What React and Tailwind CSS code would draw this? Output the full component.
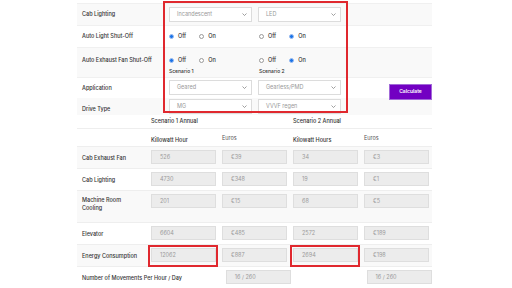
import React from 'react';

const Chevron = () => (
    <svg width="5" height="3" viewBox="0 0 5 3" className="shrink-0">
        <path d="M0.5 0.5 L2.5 2.5 L4.5 0.5" fill="none" stroke="#777" strokeWidth="0.7" />
    </svg>
);

const Select = ({ value, width = 'w-[83px]' }) => (
    <div className={`${width} h-[15px] bg-white border border-[#dcdcdc] flex items-center justify-between pl-[7px] pr-[4px] text-[#999] text-[5.5px]`}>
        <span>{value}</span>
        <Chevron />
    </div>
);

const Radio = ({ checked }) =>
    checked ? (
        <span className="w-[5px] h-[5px] rounded-full bg-[#1a73e8] border border-[#9bbcf0] inline-block" />
    ) : (
        <span className="w-[5px] h-[5px] rounded-full bg-white border border-[#9a9a9a] inline-block" />
    );

const RadioPair = ({ on }) => (
    <div className="flex items-center gap-[4px] text-[5.5px] text-[#333] font-medium">
        <Radio checked={!on} />
        <span className="mr-[9px]">Off</span>
        <Radio checked={on} />
        <span>On</span>
    </div>
);

const Field = ({ value, boxed }) => (
    <div className="relative w-[65px]">
        <div className="h-[14px] bg-[#ececec] border border-[#dedede] flex items-center pl-[8px] text-[#9a9a9a] text-[5.5px]">
            {value}
        </div>
        {boxed && <div className="absolute -left-[3px] -right-[2px] -top-[3px] -bottom-[5px] border-2 border-[#e0282e]" />}
    </div>
);

const rows = [
    { label: 'Cab Exhaust Fan', values: ['526', '€39', '34', '€3'], bg: 'bg-[#f9f9f9]' },
    { label: 'Cab Lighting', values: ['4730', '€348', '19', '€1'], bg: 'bg-white' },
    { label: 'Machine Room Cooling', values: ['201', '€15', '68', '€5'], bg: 'bg-[#f9f9f9]', tall: true },
    { label: 'Elevator', values: ['6604', '€485', '2572', '€189'], bg: 'bg-white' },
    { label: 'Energy Consumption', values: ['12062', '€887', '2694', '€198'], bg: 'bg-[#f9f9f9]', boxed: [0, 2] },
];

export default function App() {
    return (
        <div className="w-[512px] h-[288px] bg-white overflow-hidden font-['Inter',sans-serif]">
            <div className="ml-[77px] w-[355px] pt-[3px]">
                {/* inputs */}
                <div className="relative">
                    <div className="flex h-[22px] items-center bg-[#f9f9f9] border-t border-[#f0f0f0]">
                        <div className="w-[86px] pl-[5px] text-[5.5px] font-medium text-[#333]">Cab Lighting</div>
                        <div className="w-[90px] pl-[6px]"><Select value="Incandescent" /></div>
                        <div className="w-[95px] pl-[5px]"><Select value="LED" /></div>
                    </div>
                    <div className="flex h-[22px] items-center bg-white border-t border-[#f0f0f0]">
                        <div className="w-[86px] pl-[5px] text-[5.5px] font-medium text-[#333]">Auto Light Shut-Off</div>
                        <div className="w-[90px] pl-[6px]"><RadioPair on={false} /></div>
                        <div className="w-[95px] pl-[6px]"><RadioPair on={true} /></div>
                    </div>
                    <div className="flex h-[30px] pt-[8px] bg-[#f9f9f9] border-t border-[#f0f0f0]">
                        <div className="w-[86px] pl-[5px] text-[5.5px] font-medium text-[#333]">Auto Exhaust Fan Shut-Off</div>
                        <div className="w-[90px] pl-[6px] flex flex-col gap-[4px]">
                            <RadioPair on={false} />
                            <span className="text-[5px] font-medium text-[#333]">Scenario 1</span>
                        </div>
                        <div className="w-[95px] pl-[6px] flex flex-col gap-[4px]">
                            <RadioPair on={true} />
                            <span className="text-[5px] font-medium text-[#333]">Scenario 2</span>
                        </div>
                    </div>
                    <div className="flex h-[21px] pt-[2px] bg-white border-t border-[#f0f0f0]">
                        <div className="w-[86px] pl-[5px] pt-[4px] text-[5.5px] font-medium text-[#333]">Application</div>
                        <div className="w-[90px] pl-[6px]"><Select value="Geared" /></div>
                        <div className="w-[95px] pl-[5px]"><Select value="Gearless/PMD" /></div>
                        <div className="flex-1 flex justify-end pt-[4px]">
                            <button className="w-[43px] h-[16px] bg-[#7200c2] border border-[#a26ad8] text-white text-[5px] font-semibold">Calculate</button>
                        </div>
                    </div>
                    <div className="flex h-[17px] pt-[1px] bg-[#f9f9f9]">
                        <div className="w-[86px] pl-[5px] pt-[6px] text-[5.5px] font-medium text-[#333]">Drive Type</div>
                        <div className="w-[90px] pl-[6px]"><Select value="MG" /></div>
                        <div className="w-[95px] pl-[5px]"><Select value="VVVF regen" /></div>
                    </div>
                    <div className="absolute left-[86px] -top-[2px] w-[185px] h-[112px] border-2 border-[#e0282e] pointer-events-none" />
                </div>

                {/* results */}
                <div className="flex h-[13px] items-center bg-white">
                    <div className="w-[74px]" />
                    <div className="w-[142px] text-[5.5px] font-medium text-[#333]">Scenario 1 Annual</div>
                    <div className="flex-1 text-[5.5px] font-medium text-[#333]">Scenario 2 Annual</div>
                </div>
                <div className="flex h-[18px] bg-white border-t border-[#eeeeee] text-[5.5px]">
                    <div className="w-[74px]" />
                    <div className="w-[71px] pt-[7px] font-medium text-[#333]">Killowatt Hour</div>
                    <div className="w-[71px] pt-[5px] text-[#555]">Euros</div>
                    <div className="w-[71px] pt-[7px] font-medium text-[#333]">Kilowatt Hours</div>
                    <div className="flex-1 pt-[5px] text-[#555]">Euros</div>
                </div>
                {rows.map((row) => (
                    <div key={row.label} className={`flex border-t border-[#eeeeee] ${row.bg} ${row.tall ? 'h-[32px]' : 'h-[22px]'}`}>
                        <div className="w-[69px] pl-[5px] shrink-0">
                            <div className={`text-[5.5px] font-medium text-[#333] leading-[8px] ${row.tall ? 'pt-[5px] w-[50px]' : 'pt-[7px] whitespace-nowrap'}`}>
                                {row.label}
                            </div>
                        </div>
                        {row.values.map((v, i) => (
                            <div key={i} className="w-[71px] pl-[5px] pt-[3px]">
                                <Field value={v} boxed={row.boxed?.includes(i)} />
                            </div>
                        ))}
                    </div>
                ))}
                <div className="flex h-[22px] bg-white border-t border-[#eeeeee]">
                    <div className="w-[145px] pl-[5px] pt-[7px] text-[5.5px] font-medium text-[#333] leading-[8px]">
                        Number of Movements Per Hour / Day
                    </div>
                    <div className="w-[71px] pl-[5px] pt-[3px]"><Field value="16 / 260" /></div>
                    <div className="w-[71px]" />
                    <div className="w-[71px] pl-[5px] pt-[3px]"><Field value="16 / 260" /></div>
                </div>
            </div>
        </div>
    );
}
